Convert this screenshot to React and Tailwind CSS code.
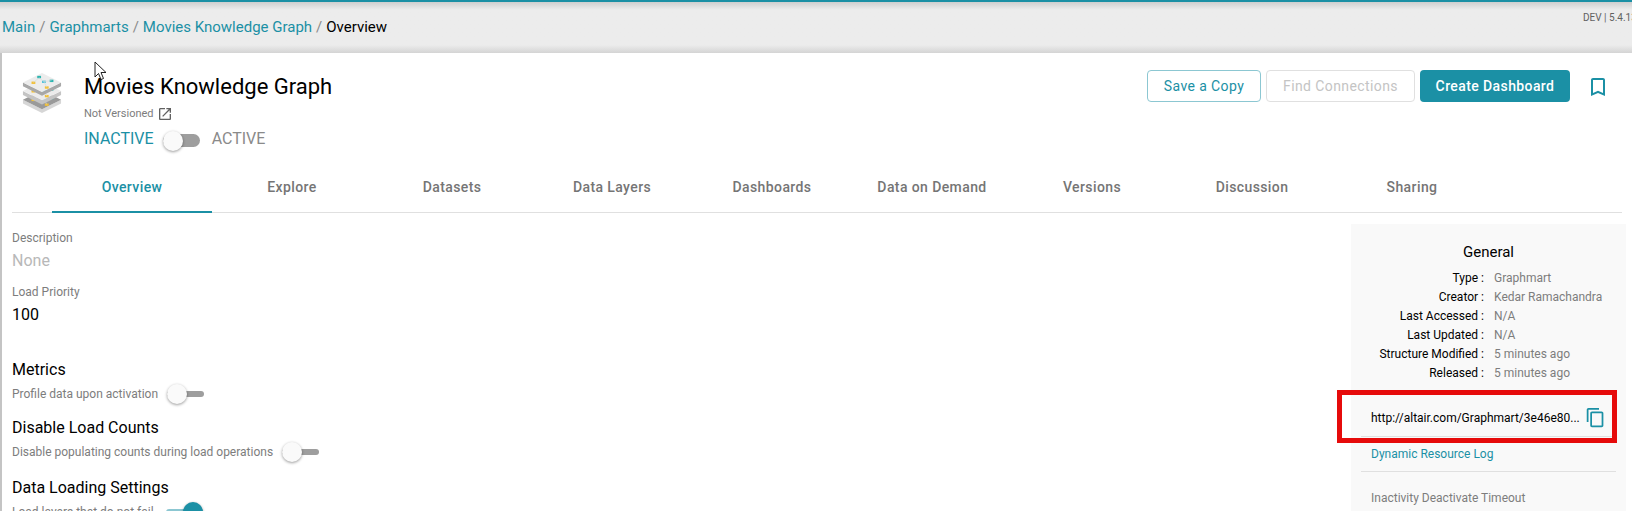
const tabs = ["Overview", "Explore", "Datasets", "Data Layers", "Dashboards", "Data on Demand", "Versions", "Discussion", "Sharing"];

const generalRows = [
  ["Type :", "Graphmart"],
  ["Creator :", "Kedar Ramachandra"],
  ["Last Accessed :", "N/A"],
  ["Last Updated :", "N/A"],
  ["Structure Modified :", "5 minutes ago"],
  ["Released :", "5 minutes ago"],
];

function Toggle({ on = false, big = false, className = "" }) {
  return (
    <div className={`relative w-[37px] shrink-0 rounded-full ${big ? "h-[13px]" : "h-[6px]"} ${on ? "bg-[#8cc7d2]" : "bg-[#9e9e9e]"} ${className}`}>
      <div
        className={`absolute h-5 w-5 rounded-full shadow-[0_1px_3px_rgba(0,0,0,0.4)] ${big ? "top-[-3px]" : "top-[-7px]"} ${
          on ? "right-0 bg-[#1b90a5]" : "left-0 bg-[#fafafa]"
        }`}
      />
    </div>
  );
}

function Layer({ y, top, side, dots }) {
  return (
    <g transform={`translate(0 ${y})`}>
      <path d="M1 10 L21 20 L41 10 L41 14 L21 24 L1 14 Z" fill={side} />
      <path d="M21 0 L41 10 L21 20 L1 10 Z" fill={top} />
      {dots && (
        <>
          <rect x="16" y="3" width="4" height="2.5" fill="#2cb5b0" />
          <rect x="10" y="9" width="4" height="2.5" fill="#f2c037" />
          <rect x="21" y="8" width="4" height="2.5" fill="#55c3dc" />
          <rect x="29" y="7" width="4" height="2.5" fill="#2cb5b0" />
          <rect x="24" y="14" width="4" height="2.5" fill="#f2c037" />
          <path d="M18 5 L12 10 M18 5 L23 9 L31 8 M23 9 L26 15" stroke="#cfd8dc" strokeWidth="0.6" fill="none" />
        </>
      )}
    </g>
  );
}

function LayersIcon() {
  return (
    <svg width="40" height="40" viewBox="0 0 42 42" className="shrink-0">
      <Layer y="18" top="#9a9a9a" side="#d6d6d6" dots />
      <Layer y="9" top="#ececec" side="#c4c4c4" dots />
      <Layer y="0" top="#ececec" side="#a8a8a8" dots />
    </svg>
  );
}

function SettingBlock({ title, text, toggleOn, toggleClass = "", className = "" }) {
  return (
    <div className={className}>
      <div className="text-base leading-5 text-black">{title}</div>
      <div className="mt-1 flex h-5 items-center gap-[9px] text-xs text-[#7d7d7d]">
        <span>{text}</span>
        <Toggle on={toggleOn} className={toggleClass} />
      </div>
    </div>
  );
}

export default function App() {
  return (
    <div className="relative h-[511px] w-[1632px] overflow-hidden bg-[#ececec] font-['Roboto',sans-serif]">
      {/* top bar */}
      <div className="h-[2px] bg-[#1b90a5]" />
      <div className="relative h-[51px] bg-gradient-to-b from-[#cfcfcf] via-[#ececec] via-15% to-[#ececec]">
        <div className="flex items-center gap-1 pl-[2px] pt-[15px] text-[15px] leading-5 text-[#1b90a5]">
          <span>Main</span>
          <span className="text-[#8a8a8a]">/</span>
          <span>Graphmarts</span>
          <span className="text-[#8a8a8a]">/</span>
          <span>Movies Knowledge Graph</span>
          <span className="text-[#8a8a8a]">/</span>
          <span className="text-black">Overview</span>
        </div>
        <div className="absolute left-[1583px] top-[10px] whitespace-nowrap text-[10px] leading-3 text-[#616161]">DEV | 5.4.13</div>
        <div className="absolute inset-x-0 bottom-0 h-[8px] bg-gradient-to-b from-transparent to-[#d4d4d4]" />
      </div>

      {/* main card */}
      <div className="ml-[2px] h-[458px] overflow-hidden bg-white shadow-[-2px_0_0_#c4c4c4]">
        <div className="flex h-[107px] items-start">
          <div className="ml-[20px] mt-[20px]">
            <LayersIcon />
          </div>
          <div className="ml-[22px] mt-[20px]">
            <div className="text-[22px] leading-7 text-black">Movies Knowledge Graph</div>
            <div className="mt-[5px] flex h-4 items-center gap-[3px] text-[11px] text-[#7d7d7d]">
              Not Versioned
              <svg viewBox="0 0 24 24" className="h-4 w-4 fill-[#616161]">
                <path d="M19 19H5V5h7V3H5c-1.11 0-2 .9-2 2v14c0 1.1.89 2 2 2h14c1.1 0 2-.9 2-2v-7h-2v7zM14 3v2h3.59l-9.83 9.83 1.41 1.41L19 6.41V10h2V3h-7z" />
              </svg>
            </div>
            <div className="mt-[7px] flex items-center text-base leading-5">
              <span className="text-[#1b90a5]">INACTIVE</span>
              <Toggle big className="ml-[9px] mt-[3px]" />
              <span className="ml-[12px] text-[#8a8a8a]">ACTIVE</span>
            </div>
          </div>
          <div className="ml-auto mr-[22px] mt-[17px] flex items-start">
            <button className="h-[32px] w-[114px] rounded border border-[#8cc7d2] text-sm tracking-[0.4px] text-[#1b90a5]">Save a Copy</button>
            <button className="ml-[5px] h-[32px] w-[149px] rounded border border-[#e0e0e0] text-sm tracking-[0.4px] text-[#c4c4c4]">Find Connections</button>
            <button className="ml-[5px] h-[32px] w-[150px] rounded bg-[#1b90a5] text-sm font-medium tracking-[0.4px] text-white">Create Dashboard</button>
            <svg viewBox="0 0 24 24" className="ml-[16px] mt-[5px] h-6 w-6 fill-[#1b90a5]">
              <path d="M17 3H7c-1.1 0-2 .9-2 2v16l7-3 7 3V5c0-1.1-.9-2-2-2zm0 15l-5-2.18L7 18V5h10v13z" />
            </svg>
          </div>
        </div>

        {/* tabs */}
        <div className="mx-[10px] flex h-[53px] items-stretch border-b border-[#e0e0e0] pl-[40px]">
          {tabs.map((tab, i) => (
            <div
              key={tab}
              className={`-mb-px flex w-[160px] items-center justify-center border-b-2 pt-[2px] text-sm font-medium tracking-[0.4px] ${
                i === 0 ? "border-[#1b90a5] text-[#1b90a5]" : "border-transparent text-[#757575]"
              }`}
            >
              {tab}
            </div>
          ))}
        </div>

        <div className="flex">
          {/* left column */}
          <div className="flex-1 pl-[10px] pt-[17px]">
            <div className="text-xs leading-4 text-[#7d7d7d]">Description</div>
            <div className="mt-[5px] text-base leading-5 text-[#b8b8b8]">None</div>
            <div className="mt-[13px] text-xs leading-4 text-[#7d7d7d]">Load Priority</div>
            <div className="mt-[5px] text-base leading-5 text-black">100</div>
            <SettingBlock className="mt-[35px]" title="Metrics" text="Profile data upon activation" />
            <SettingBlock className="mt-[14px]" title="Disable Load Counts" text="Disable populating counts during load operations" />
            <SettingBlock className="mt-[16px]" title="Data Loading Settings" text="Load layers that do not fail" toggleOn toggleClass="ml-[3px]" />
          </div>

          {/* general panel */}
          <div className="mr-[6px] mt-[11px] h-[300px] w-[275px] bg-[#f9f9f9] px-[10px] pt-[18px]">
            <div className="text-center text-[15px] leading-5 text-black">General</div>
            <div className="mt-[7px] grid grid-cols-[1fr_122px] gap-x-[10px] text-xs leading-[19px]">
              {generalRows.map(([label, value]) => (
                <div key={label} className="contents">
                  <span className="text-right text-black">{label}</span>
                  <span className="text-[#7d7d7d]">{value}</span>
                </div>
              ))}
            </div>
            <div className="mt-[16px] flex h-[38px] items-center border-b border-[#e0e0e0] pl-[10px]">
              <span className="w-[214px] whitespace-nowrap text-xs text-black">http://altair.com/Graphmart/3e46e80...</span>
              <svg viewBox="0 0 24 24" className="h-[21px] w-[21px] fill-[#1b90a5]">
                <path d="M16 1H4c-1.1 0-2 .9-2 2v14h2V3h12V1zm3 4H8c-1.1 0-2 .9-2 2v14c0 1.1.9 2 2 2h11c1.1 0 2-.9 2-2V7c0-1.1-.9-2-2-2zm0 16H8V7h11v14z" />
              </svg>
            </div>
            <div className="flex h-[35px] items-center border-b border-[#e0e0e0] pl-[10px] text-xs text-[#1b90a5]">Dynamic Resource Log</div>
            <div className="pl-[10px] pt-[18px] text-xs leading-4 text-[#7d7d7d]">Inactivity Deactivate Timeout</div>
          </div>
        </div>
      </div>

      {/* red annotation box */}
      <div className="absolute left-[1337px] top-[390px] h-[53px] w-[280px] border-[5px] border-[#e60b0b]" />

      {/* mouse cursor in the capture */}
      <svg className="absolute left-[94px] top-[61px]" width="14" height="20" viewBox="0 0 14 20">
        <path d="M1 1 L1 16 L4.5 12.5 L7 18.5 L9.5 17.5 L7 11.5 L12 11.5 Z" fill="#fff" stroke="#222" strokeWidth="1" />
      </svg>
    </div>
  );
}
